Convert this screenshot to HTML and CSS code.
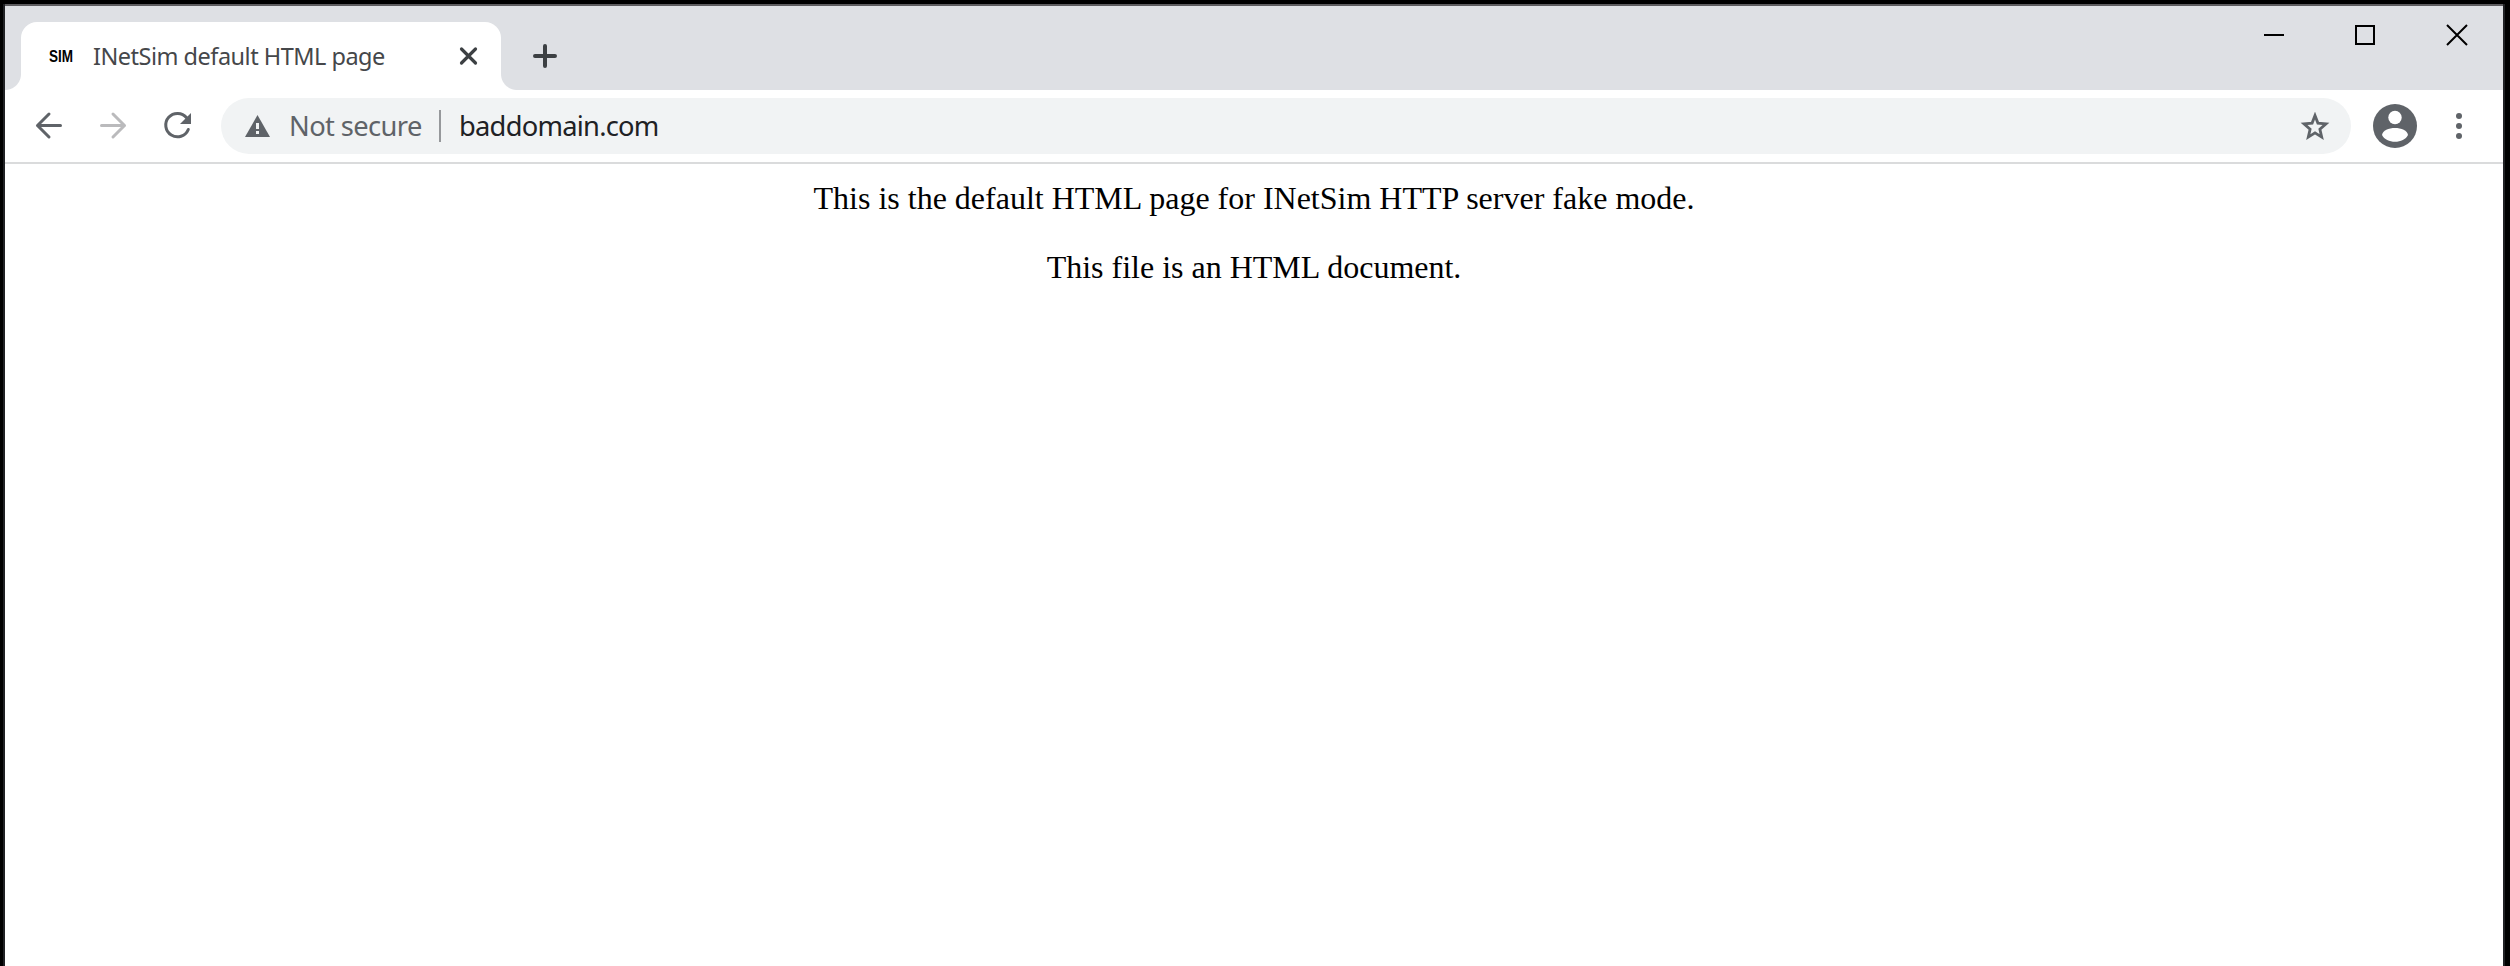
FILE: index.html
```html
<!DOCTYPE html>
<html lang="en">
<head>
<meta charset="utf-8">
<title>INetSim default HTML page</title>
<link rel="stylesheet" href="styles.css">
</head>
<body>
<div class="window">
  <header class="tabstrip">
    <div class="tab">
      <svg class="favicon" width="24" height="20"><text x="0" y="16" textLength="24" lengthAdjust="spacingAndGlyphs">SIM</text></svg>
      <span class="tab-title">INetSim default HTML page</span>
      <svg class="tab-close" width="18" height="18" viewBox="0 0 18 18"><path d="M2.500 2L16.500 16M16.500 2L2.500 16"/></svg>
    </div>
    <svg class="new-tab" width="24" height="24" viewBox="0 0 24 24"><path d="M12 2V22M2 12H22"/></svg>
    <div class="controls">
      <svg width="20" height="20" viewBox="0 0 20 20"><path d="M1 10H21"/></svg>
      <svg width="20" height="20" viewBox="0 0 20 20"><path d="M1 1H19V19H1Z"/></svg>
      <svg width="20" height="20" viewBox="0 0 20 20"><path d="M0 0L20 20M20 0L0 20"/></svg>
    </div>
  </header>
  <nav class="toolbar">
    <svg class="icon back" width="26" height="26" viewBox="0 0 26 26"><path d="M24.500 12.500H1.500M13 1L1.500 12.500L13 24"/></svg>
    <svg class="icon forward" width="26" height="26" viewBox="0 0 26 26"><path d="M1.500 12.500H24.500M13 1L24.500 12.500L13 24"/></svg>
    <svg class="icon reload" width="28" height="28" viewBox="0 0 28 28"><path d="M22.600 5.800A11.700 11.700 0 1 0 24.300 17.500"/><path class="solid" d="M27 1V12H16Z"/></svg>
    <div class="omnibox">
      <svg class="warning" width="25" height="22" viewBox="0 0 25 22"><path fill="#5f6368" d="M12.5 0L25 22H0Z"/><path fill="#f1f3f4" d="M11 8h3v6h-3zM11 16h3v3h-3z"/></svg>
      <span class="status">Not secure</span>
      <span class="divider"></span>
      <span class="address">baddomain.com</span>
      <svg class="star" width="30" height="29" viewBox="0 0 30 29"><path d="M15 3.500L17.900 11.100L26 11.800L19.900 17.200L21.700 25.100L15 20.900L8.300 25.100L10.100 17.200L4 11.800L12.100 11.100Z"/></svg>
    </div>
    <svg class="profile" width="44" height="44" viewBox="0 0 44 44"><circle cx="22" cy="22" r="22" fill="#5f6368"/><circle cx="22" cy="13.5" r="6.7" fill="#fff"/><path fill="#fff" d="M9 31C10 21.500 34 21.500 35 31C31 40 13 40 9 31Z"/></svg>
    <svg class="menu" width="6" height="26" viewBox="0 0 6 26"><circle cx="3" cy="3" r="3"/><circle cx="3" cy="13" r="3"/><circle cx="3" cy="23" r="3"/></svg>
  </nav>
  <main class="page">
    <p>This is the default HTML page for INetSim HTTP server fake mode.</p>
    <p>This file is an HTML document.</p>
  </main>
</div>
</body>
</html>
```

FILE: styles.css
```css
* { box-sizing: border-box; }
body { margin: 0; background: #000; overflow: hidden; }
svg { display: block; flex: none; }
.window {
  height: 966px;
  border: solid #000;
  border-width: 4px 5px 0 3px;
  background: #fff;
  box-shadow: inset 2px 0 #202124, inset -2px 0 #202124;
  padding: 0 2px;
}
.tabstrip {
  display: flex;
  height: 86px;
  padding: 16px 36px 0 16px;
  border-top: 2px solid #5d5c5f;
  background: #dee0e4;
}
.tab {
  position: relative;
  display: flex;
  align-items: center;
  width: 480px;
  height: 68px;
  padding: 0 24px 0 28px;
  border-radius: 16px 16px 0 0;
  background: #fff;
}
.tab::before, .tab::after {
  content: "";
  position: absolute;
  bottom: 0;
  width: 16px;
  height: 16px;
}
.tab::before { left: -16px; background: radial-gradient(circle at 0 0, #dee0e4 15.5px, #fff 16.5px); }
.tab::after { right: -16px; background: radial-gradient(circle at 100% 0, #dee0e4 15.5px, #fff 16.5px); }
.favicon { overflow: visible; font: bold 17px "Liberation Sans", sans-serif; }
.tab-title {
  margin-left: 20px;
  padding-bottom: 1px;
  color: #45474a;
  font: 23.5px/32px "Noto Sans", sans-serif;
  letter-spacing: -0.5px;
  white-space: nowrap;
}
.tab-close { margin-left: auto; fill: none; stroke: #3c4043; stroke-width: 3.2; stroke-linecap: round; overflow: visible; }
.new-tab { margin: 22px 0 0 32px; fill: none; stroke: #3c4043; stroke-width: 4; stroke-linecap: round; }
.controls {
  display: flex;
  gap: 72px;
  margin: 3px 0 0 auto;
  fill: none;
  stroke: #000;
  stroke-width: 2;
}
.controls svg { overflow: visible; }
.toolbar {
  display: flex;
  align-items: center;
  height: 74px;
  padding: 0 41px 0 31px;
  border-bottom: 2px solid #dadbdc;
}
.icon { fill: none; stroke: #5f6368; stroke-width: 3; stroke-linecap: round; stroke-linejoin: round; overflow: visible; }
.forward { margin-left: 38px; stroke: #bababc; }
.reload { margin-left: 38px; }
.reload .solid { fill: #5f6368; stroke: none; }
.omnibox {
  display: flex;
  align-items: center;
  flex: 1;
  height: 56px;
  margin: 0 22px 0 29px;
  padding: 0 21px 0 24px;
  border-radius: 28px;
  background: #f1f3f4;
  font: 27.3px/36px "Noto Sans", sans-serif;
  white-space: nowrap;
}
.status { margin-left: 19px; padding-bottom: 1px; width: 136px; color: #5f6368; letter-spacing: -0.6px; }
.divider { width: 2px; height: 32px; margin-left: 14px; background: #96989b; }
.address { margin-left: 18px; padding-bottom: 1px; color: #202124; letter-spacing: -0.75px; }
.star { margin-left: auto; fill: none; stroke: #5f6368; stroke-width: 2.8; }
.menu { margin-left: 39px; fill: #5f6368; }
.page { padding: 16px; color: #000; font: 32px/37px "Liberation Serif", serif; text-align: center; }
.page p { margin: 0 0 32px; }
```
